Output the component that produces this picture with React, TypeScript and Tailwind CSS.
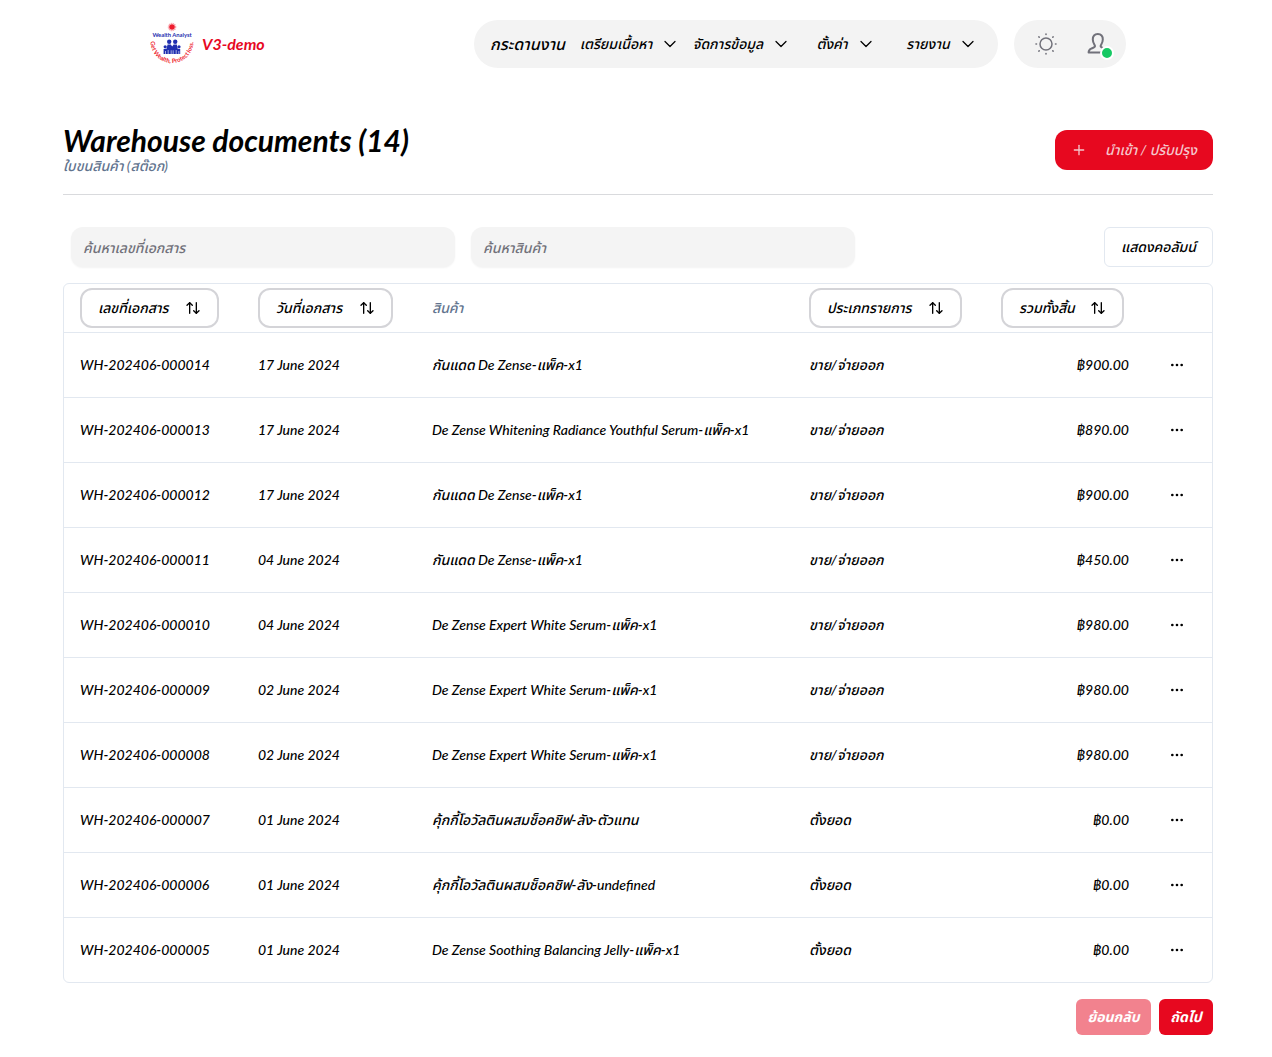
import { ArrowUpDown, ChevronDown, MoreHorizontal, Plus } from 'lucide-react'

const menus = [
  { label: 'เตรียมเนื้อหา', className: 'w-24' },
  { label: 'จัดการข้อมูล', className: 'w-24' },
  { label: 'ตั้งค่า', className: 'w-20' },
  { label: 'รายงาน', className: 'w-20' },
]

const columns = [
  { label: 'เลขที่เอกสาร', sortable: true, className: 'w-[178px]', button: 'w-[139px]' },
  { label: 'วันที่เอกสาร', sortable: true, className: 'w-[174px]', button: 'w-[135px]' },
  { label: 'สินค้า', sortable: false, className: '', button: '' },
  { label: 'ประเภทรายการ', sortable: true, className: 'w-[192px]', button: 'w-[153px]' },
  { label: 'รวมทั้งสิ้น', sortable: true, className: 'w-[160px]', button: 'w-[123px]' },
]

const documents = [
  { id: 'WH-202406-000014', date: '17 June 2024', product: 'กันแดด De Zense-แพ็ค-x1', type: 'ขาย/จ่ายออก', total: '฿900.00' },
  { id: 'WH-202406-000013', date: '17 June 2024', product: 'De Zense Whitening Radiance Youthful Serum-แพ็ค-x1', type: 'ขาย/จ่ายออก', total: '฿890.00' },
  { id: 'WH-202406-000012', date: '17 June 2024', product: 'กันแดด De Zense-แพ็ค-x1', type: 'ขาย/จ่ายออก', total: '฿900.00' },
  { id: 'WH-202406-000011', date: '04 June 2024', product: 'กันแดด De Zense-แพ็ค-x1', type: 'ขาย/จ่ายออก', total: '฿450.00' },
  { id: 'WH-202406-000010', date: '04 June 2024', product: 'De Zense Expert White Serum-แพ็ค-x1', type: 'ขาย/จ่ายออก', total: '฿980.00' },
  { id: 'WH-202406-000009', date: '02 June 2024', product: 'De Zense Expert White Serum-แพ็ค-x1', type: 'ขาย/จ่ายออก', total: '฿980.00' },
  { id: 'WH-202406-000008', date: '02 June 2024', product: 'De Zense Expert White Serum-แพ็ค-x1', type: 'ขาย/จ่ายออก', total: '฿980.00' },
  { id: 'WH-202406-000007', date: '01 June 2024', product: 'คุ้กกี้โอวัลตินผสมช็อคชิฟ-ลัง-ตัวแทน', type: 'ตั้งยอด', total: '฿0.00' },
  { id: 'WH-202406-000006', date: '01 June 2024', product: 'คุ้กกี้โอวัลตินผสมช็อคชิฟ-ลัง-undefined', type: 'ตั้งยอด', total: '฿0.00' },
  { id: 'WH-202406-000005', date: '01 June 2024', product: 'De Zense Soothing Balancing Jelly-แพ็ค-x1', type: 'ตั้งยอด', total: '฿0.00' },
]

function Logo() {
  return (
    <svg viewBox="0 0 44 48" className="h-12 w-11 overflow-visible not-italic" aria-hidden="true">
      <circle cx="22" cy="7" r="3.6" fill="none" stroke="#f9a3ab" strokeWidth="1.4" strokeDasharray="1.2 0.7" />
      <circle cx="22" cy="7" r="2.8" fill="#ee1c2e" />
      <text x="22" y="17.2" textAnchor="middle" fontSize="5.8" fontWeight="700" fill="#1f2fb0">
        Wealth Analyst
      </text>
      <g fill="#1f2fb0">
        <circle cx="19.2" cy="21.8" r="2.2" />
        <circle cx="25.2" cy="21.8" r="2.2" />
        <circle cx="15.2" cy="26.8" r="1.6" />
        <circle cx="29" cy="26.8" r="1.6" />
        <path d="M17.6 24.4h3.200l1.400 2 1.400-2h3.200l1 4.600h2.400v5h-1v-3h-.6v3h-2.200v-4h-.6v4h-2.400v-3.800h-.6V34h-1.400v-3.800h-.6V34h-2.400v-4h-.6v4h-2.200v-3H15v3h-1.400v-5h2.800z" />
      </g>
      <path id="logo-arc" d="M0.600 21.600A21.400 21.400 0 0 0 43.400 21.600" fill="none" />
      <text fontSize="6" fontWeight="700" fill="#ee1c2e">
        <textPath href="#logo-arc">Get Wealth, Protect loss.</textPath>
      </text>
    </svg>
  )
}

function SunIcon() {
  return (
    <svg viewBox="0 0 24 24" className="h-6 w-6" fill="none" stroke="currentColor" strokeLinecap="round" aria-hidden="true">
      <circle cx="12" cy="12" r="6" strokeWidth="1.5" />
      <path
        d="M12 2v.5M12 21.5v.5M2 12h.5M21.5 12h.5M4.900 4.900l.3.3M18.800 18.800l.3.3M4.900 19.100l.3-.3M18.800 5.200l.3-.3"
        strokeWidth="1.6"
      />
    </svg>
  )
}

function UserIcon() {
  return (
    <svg viewBox="0 0 24 24" className="h-6 w-6" fill="none" stroke="currentColor" strokeWidth="2" strokeLinejoin="round" aria-hidden="true">
      <path d="M17 20.600H2.600c0-2.200.7-3.200 2.600-4 2-.8 3.800-1.200 3.800-2.600 0-1.200-2.200-2.800-2.200-6.400C6.800 4 8 2 11.800 2s5 2 5 5.600c0 3.600-2.200 5.200-2.200 6.400 0 1.200 1.200 1.700 2.800 2.200" />
    </svg>
  )
}

function Header() {
  return (
    <header className="mx-auto flex h-[88px] max-w-5xl items-center justify-between px-6">
      <a href="#" className="flex items-center gap-2 text-base font-bold text-[#e7081f]">
        <Logo />
        V3-demo
      </a>
      <div className="flex items-center gap-4">
        <nav className="flex h-12 items-center gap-4 rounded-full bg-[#f3f3f3] px-4">
          <a href="#" className="w-19 text-base whitespace-nowrap">
            กระดานงาน
          </a>
          {menus.map((menu) => (
            <button
              key={menu.label}
              className={`flex items-center justify-center gap-2 text-sm whitespace-nowrap ${menu.className}`}
            >
              {menu.label}
              <ChevronDown className="h-5 w-5 shrink-0" strokeWidth={1.5} />
            </button>
          ))}
        </nav>
        <div className="flex h-12 w-28 items-center justify-between rounded-full bg-[#f3f3f3] pr-4 pl-5 text-[#71717a]">
          <button aria-label="Toggle theme">
            <SunIcon />
          </button>
          <button aria-label="Account" className="relative">
            <UserIcon />
            <span className="absolute -right-1 -bottom-1 h-3.5 w-3.5 rounded-full border-2 border-white bg-[#17c964]" />
          </button>
        </div>
      </div>
    </header>
  )
}

export default function App() {
  return (
    <div className="min-h-screen bg-white pl-1 font-['Lato','Noto_Sans_Thai',sans-serif] font-medium text-black italic">
      <Header />

      <main className="px-[59px] pt-9">
        {/* Heading */}
        <div className="flex items-center justify-between border-b border-[#d9dadd] pb-[18px]">
          <div>
            <h1 className="text-3xl leading-8 font-bold">Warehouse documents (14)</h1>
            <p className="text-sm text-slate-500">ใบขนสินค้า (สต๊อก)</p>
          </div>
          <button className="flex h-10 w-[158px] items-center justify-between rounded-xl bg-[#e7081f] px-4 text-sm whitespace-nowrap text-[#f5c6cc]">
            <Plus className="h-4 w-4" />
            นำเข้า / ปรับปรุง
          </button>
        </div>

        {/* Filters */}
        <div className="mt-8 flex items-center gap-4 pl-2">
          <input
            type="text"
            aria-label="ค้นหาเลขที่เอกสาร"
            placeholder="ค้นหาเลขที่เอกสาร"
            className="h-10 w-full max-w-sm rounded-xl bg-[#f4f4f4] px-3 text-sm shadow-xs placeholder:text-[#71717a]"
          />
          <input
            type="text"
            aria-label="ค้นหาสินค้า"
            placeholder="ค้นหาสินค้า"
            className="h-10 w-full max-w-sm rounded-xl bg-[#f4f4f4] px-3 text-sm shadow-xs placeholder:text-[#71717a]"
          />
          <button className="ml-auto h-10 w-[109px] shrink-0 rounded-md border border-slate-200 text-sm whitespace-nowrap">
            แสดงคอลัมน์
          </button>
        </div>

        {/* Documents */}
        <div className="mt-4 rounded-md border border-slate-200">
          <table className="w-full table-fixed text-sm">
            <thead>
              <tr className="h-12 border-b border-slate-200">
                {columns.map((column) => (
                  <th key={column.label} className={`px-4 text-left font-medium text-slate-500 ${column.className}`}>
                    {column.sortable ? (
                      <button
                        className={`flex h-10 items-center justify-between rounded-xl border-2 border-[#d4d4d8] px-4 whitespace-nowrap text-black ${column.button}`}
                      >
                        {column.label}
                        <ArrowUpDown className="h-4 w-4 shrink-0" />
                      </button>
                    ) : (
                      column.label
                    )}
                  </th>
                ))}
                <th className="w-[67px]" />
              </tr>
            </thead>
            <tbody>
              {documents.map((doc) => (
                <tr key={doc.id} className="h-[65px] border-b border-slate-200 last:border-0">
                  <td className="px-4 whitespace-nowrap">{doc.id}</td>
                  <td className="px-4 whitespace-nowrap">{doc.date}</td>
                  <td className="px-4">{doc.product}</td>
                  <td className="px-4">{doc.type}</td>
                  <td className="px-4 text-right">{doc.total}</td>
                  <td className="pl-4">
                    <button aria-label="Open menu" className="flex h-8 w-8 items-center justify-center">
                      <MoreHorizontal className="h-4 w-4" />
                    </button>
                  </td>
                </tr>
              ))}
            </tbody>
          </table>
        </div>

        {/* Pagination */}
        <div className="flex justify-end gap-2 py-4 text-sm font-bold text-white">
          <button disabled className="h-9 w-[75px] rounded-md bg-[#e7081f] opacity-50">
            ย้อนกลับ
          </button>
          <button className="h-9 w-[54px] rounded-md bg-[#e7081f]">ถัดไป</button>
        </div>
      </main>
    </div>
  )
}
